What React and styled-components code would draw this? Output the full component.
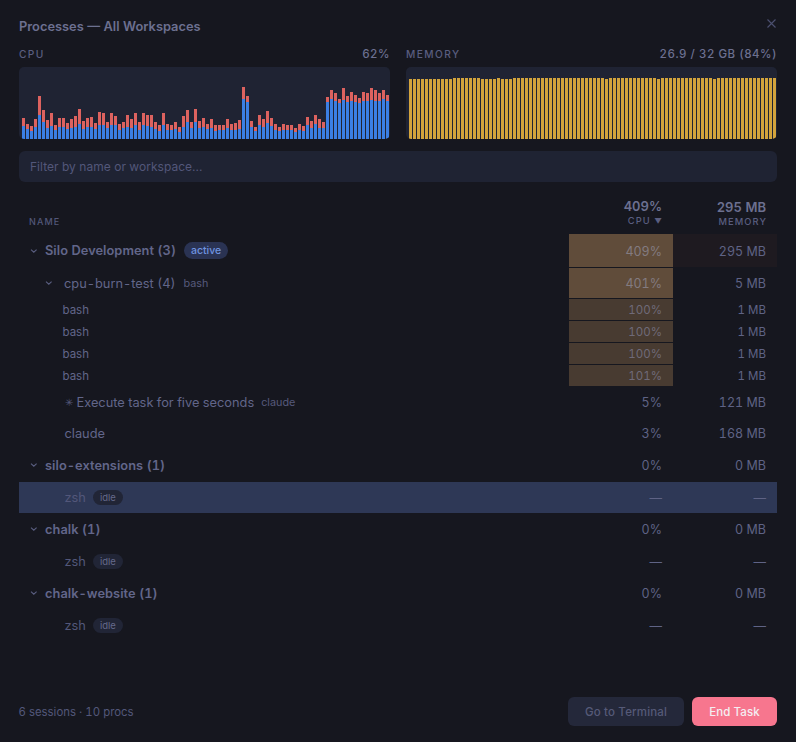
import React from "react";
import styled, { createGlobalStyle } from "styled-components";

const GlobalStyle = createGlobalStyle`
    html, body {
        margin: 0;
        padding: 0;
        background-color: #16171f;
    }
    * {
        box-sizing: border-box;
    }
`;

const Page = styled.div`
    display: flex;
    flex-direction: column;
    width: 796px;
    height: 742px;
    padding: 18px 19px 16px;
    background-color: #16171f;
    color: #6c7090;
    font-family: Inter, "Liberation Sans", sans-serif;
    font-variant-numeric: tabular-nums;
    overflow: hidden;
`;

const TitleBar = styled.div`
    display: flex;
    justify-content: space-between;
    align-items: flex-start;
    height: 18px;
    margin-bottom: 11px;
`;

const Title = styled.div`
    font-size: 12.85px;
    line-height: 18px;
    font-weight: 600;
    color: #6c7090;
`;

const CloseIcon = styled.svg`
    width: 9px;
    height: 9px;
    margin-right: 1px;
    margin-top: 1px;
    stroke: #4c5070;
    stroke-width: 1.1;
    fill: none;
`;

const Stats = styled.div`
    display: grid;
    grid-template-columns: 371px 371px;
    column-gap: 16px;
`;

const StatHead = styled.div`
    display: flex;
    justify-content: space-between;
    align-items: center;
    height: 14px;
    margin-bottom: 6px;
`;

const StatLabel = styled.span`
    font-size: 10.2px;
    font-weight: 500;
    letter-spacing: 1.4px;
    color: #5a5e80;
`;

const StatValue = styled.span`
    font-size: 11.5px;
    font-weight: 500;
    letter-spacing: 0.5px;
    color: #6c7090;
`;

const Chart = styled.svg`
    display: block;
    width: 371px;
    height: 72px;
    border-radius: 5px;
    background-color: #1f2333;
`;

const FilterInput = styled.input`
    display: block;
    width: 100%;
    height: 31px;
    margin-top: 12px;
    padding: 0 11px;
    border: none;
    outline: none;
    border-radius: 6px;
    background-color: #1f2333;
    color: #6c7090;
    font-family: inherit;
    font-size: 12px;
    letter-spacing: 0.03px;

    &::placeholder {
        color: #53577a;
        opacity: 1;
    }
`;

const Columns = styled.div`
    display: grid;
    grid-template-columns: 1fr 104px 104px;
`;

const HeaderRow = styled(Columns)`
    height: 36px;
    margin-top: 16px;
    padding-bottom: 8px;
    align-items: end;
`;

const HeaderName = styled.div`
    padding-left: 10px;
    font-size: 9px;
    line-height: 12px;
    font-weight: 500;
    letter-spacing: 1.1px;
    color: #53577a;
`;

const HeaderCell = styled.div`
    padding-right: 11px;
    text-align: right;
`;

const HeaderTotal = styled.div`
    margin-bottom: 1px;
    font-size: 13px;
    line-height: 16px;
    font-weight: 600;
    color: #6c7090;
`;

const HeaderLabel = styled.div`
    margin-right: -1px;
    font-size: 9.3px;
    line-height: 12px;
    font-weight: 500;
    letter-spacing: 1.1px;
    color: #5a5e80;
`;

const SortMark = styled.span`
    font-size: 7.5px;
    letter-spacing: 0;
    margin-right: 1px;
`;

const Row = styled(Columns)`
    height: ${(props) => props.$height}px;
    background-color: ${(props) => (props.$selected ? "#2e3856" : "transparent")};
`;

const NameCell = styled.div`
    display: flex;
    align-items: center;
    min-width: 0;
    padding-bottom: 1px;
    padding-left: ${(props) => props.$indent}px;
`;

const Chevron = styled.svg`
    flex: none;
    width: ${(props) => props.$box}px;
    height: 8px;
    stroke: #5a5e80;
    stroke-width: 1.1;
    fill: none;
`;

const RowName = styled.span`
    font-size: ${(props) => (props.$small ? 11.5 : 12.8)}px;
    font-weight: ${(props) => (props.$bold ? 600 : 400)};
    letter-spacing: ${(props) => (props.$bold ? 0.05 : 0)}px;
    color: ${(props) => props.$color || "#62668a"};
    white-space: nowrap;
`;

const Spark = styled.span`
    margin-right: 4px;
    font-size: 10px;
    color: #53577a;
`;

const Tag = styled.span`
    margin-left: ${(props) => props.$gap}px;
    font-size: 10.8px;
    color: #565a7c;
`;

const Pill = styled.span`
    display: inline-flex;
    align-items: center;
    height: ${(props) => (props.$active ? 17 : 15)}px;
    margin-left: ${(props) => (props.$active ? 8 : 7)}px;
    padding: 0 7px;
    border-radius: 9px;
    background-color: ${(props) => (props.$active ? "#2a3353" : "#212536")};
    color: ${(props) => (props.$active ? "#6f93e0" : "#65698a")};
    font-size: ${(props) => (props.$active ? 10.5 : 9.5)}px;
    font-weight: ${(props) => (props.$active ? 500 : 400)};
`;

const heat = {
    strong: "#604c3a",
    soft: "#483b31",
    mem: "#1e1a20",
};

const ValueCell = styled.div`
    display: flex;
    align-items: center;
    justify-content: flex-end;
    padding-right: 11px;
    padding-top: ${(props) => (props.$heat ? 1 : 0)}px;
    margin-bottom: ${(props) => (props.$heat ? 1 : 0)}px;
    background-color: ${(props) => heat[props.$heat] || "transparent"};
    color: ${(props) =>
        props.$heat === "strong"
            ? "#837b80"
            : props.$heat === "soft"
              ? "#6f6a78"
              : "#5f6385"};
    font-size: ${(props) => (props.$small ? 11.5 : 12.5)}px;
`;

const Footer = styled.div`
    display: flex;
    justify-content: space-between;
    align-items: center;
    margin-top: auto;
`;

const FooterText = styled.div`
    margin-left: -0.5px;
    font-size: 11.4px;
    color: #53577a;
`;

const Buttons = styled.div`
    display: flex;
    gap: 8px;
`;

const Button = styled.div`
    display: flex;
    align-items: center;
    justify-content: center;
    width: ${(props) => props.$width}px;
    height: 29px;
    border-radius: 6px;
    background-color: ${(props) => (props.$danger ? "#f7768e" : "#24283a")};
    color: ${(props) => (props.$danger ? "#f4eef2" : "#565a78")};
    font-size: 11.5px;
    font-weight: 500;
    letter-spacing: ${(props) => (props.$danger ? 0.05 : 0.15)}px;
`;

// total height, blue height per sample
const cpuSamples = [
    [21, 13], [15, 10], [13, 8], [20, 12], [43, 24], [29, 17], [19, 11], [26, 13],
    [14, 9], [21, 12], [21, 12], [16, 10], [20, 11], [23, 12], [30, 15], [18, 10],
    [21, 12], [22, 12], [16, 10], [27, 14], [26, 14], [17, 11], [26, 14], [23, 14],
    [15, 9], [17, 11], [24, 12], [20, 11], [26, 14], [17, 9], [26, 14], [24, 13],
    [24, 12], [17, 10], [14, 8], [26, 14], [15, 9], [14, 9], [17, 10], [12, 7],
    [23, 12], [29, 17], [17, 11], [30, 17], [18, 11], [21, 12], [15, 10], [20, 11],
    [14, 8], [14, 9], [14, 9], [20, 11], [15, 9], [16, 9], [19, 10], [52, 40],
    [43, 37], [18, 12], [12, 8], [24, 14], [20, 12], [28, 16], [21, 13], [15, 9],
    [12, 8], [15, 9], [14, 9], [14, 9], [11, 7], [15, 9], [13, 8], [22, 14],
    [18, 11], [24, 15], [20, 11], [17, 11], [42, 37], [49, 40], [46, 38], [40, 36],
    [51, 39], [43, 37], [47, 38], [44, 37], [41, 36], [47, 38], [46, 38], [51, 39],
    [49, 38], [46, 38], [49, 40], [44, 38],
];

const lowMemory = [0, 1, 2, 3, 4, 5, 6, 7, 8, 9, 10, 18, 19, 20, 21, 23, 24, 25, 49, 62, 76];
const memorySamples = Array.from({ length: 92 }, (_, i) => (lowMemory.includes(i) ? 60 : 61));

const CpuChart = () => (
    <Chart viewBox="0 0 371 72">
        {cpuSamples.map(([total, blue], i) => (
            <g key={i}>
                <rect x={3 + i * 4} y={72 - total} width="3" height={total - blue} fill="#dc625f" />
                <rect x={3 + i * 4} y={72 - blue} width="3" height={blue} fill="#3b7fe4" />
            </g>
        ))}
    </Chart>
);

const MemoryChart = () => (
    <Chart viewBox="0 0 371 72">
        {memorySamples.map((h, i) => (
            <rect key={i} x={3 + i * 4} y={72 - h} width="3" height={h} fill="#d3a43c" />
        ))}
    </Chart>
);

const Caret = ({ box }) => (
    <Chevron $box={box} viewBox={`0 0 ${box} 8`}>
        <path d="M1 2.6 L3.8 5.2 L6.6 2.6" />
    </Chevron>
);

const WorkspaceRow = ({ name, cpu, memory, cpuHeat, memHeat, badge }) => (
    <Row $height={badge ? 34 : 33}>
        <NameCell $indent={11}>
            <Caret box={15} />
            <RowName $bold>{name}</RowName>
            {badge && <Pill $active>{badge}</Pill>}
        </NameCell>
        <ValueCell $heat={cpuHeat}>{cpu}</ValueCell>
        <ValueCell $heat={memHeat}>{memory}</ValueCell>
    </Row>
);

const BashRow = ({ cpu }) => (
    <Row $height={22}>
        <NameCell $indent={43.5}>
            <RowName $small>bash</RowName>
        </NameCell>
        <ValueCell $heat="soft" $small>
            {cpu}
        </ValueCell>
        <ValueCell $small>1 MB</ValueCell>
    </Row>
);

const IdleRow = ({ selected }) => (
    <Row $height={31} $selected={selected}>
        <NameCell $indent={45.5}>
            <RowName $color="#53577a">zsh</RowName>
            <Pill>idle</Pill>
        </NameCell>
        <ValueCell>—</ValueCell>
        <ValueCell>—</ValueCell>
    </Row>
);

const App = () => {
    return (
        <Page>
            <GlobalStyle />
            <TitleBar>
                <Title>Processes — All Workspaces</Title>
                <CloseIcon viewBox="0 0 9 9">
                    <path d="M0.5 0.5 L8.5 8.5 M8.5 0.5 L0.5 8.5" />
                </CloseIcon>
            </TitleBar>
            <Stats>
                <div>
                    <StatHead>
                        <StatLabel>CPU</StatLabel>
                        <StatValue>62%</StatValue>
                    </StatHead>
                    <CpuChart />
                </div>
                <div>
                    <StatHead>
                        <StatLabel>MEMORY</StatLabel>
                        <StatValue>26.9 / 32 GB (84%)</StatValue>
                    </StatHead>
                    <MemoryChart />
                </div>
            </Stats>
            <FilterInput placeholder="Filter by name or workspace..." readOnly />
            <HeaderRow>
                <HeaderName>NAME</HeaderName>
                <HeaderCell>
                    <HeaderTotal>409%</HeaderTotal>
                    <HeaderLabel>
                        CPU <SortMark>▼</SortMark>
                    </HeaderLabel>
                </HeaderCell>
                <HeaderCell>
                    <HeaderTotal>295 MB</HeaderTotal>
                    <HeaderLabel>MEMORY</HeaderLabel>
                </HeaderCell>
            </HeaderRow>
            <div>
                <WorkspaceRow
                    name="Silo Development (3)"
                    badge="active"
                    cpu="409%"
                    memory="295 MB"
                    cpuHeat="strong"
                    memHeat="mem"
                />
                <Row $height={31}>
                    <NameCell $indent={26}>
                        <Caret box={19} />
                        <RowName>cpu-burn-test (4)</RowName>
                        <Tag $gap={8}>bash</Tag>
                    </NameCell>
                    <ValueCell $heat="strong">401%</ValueCell>
                    <ValueCell>5 MB</ValueCell>
                </Row>
                <BashRow cpu="100%" />
                <BashRow cpu="100%" />
                <BashRow cpu="100%" />
                <BashRow cpu="101%" />
                <Row $height={31}>
                    <NameCell $indent={45.5}>
                        <Spark>✳</Spark>
                        <RowName>Execute task for five seconds</RowName>
                        <Tag $gap={7}>claude</Tag>
                    </NameCell>
                    <ValueCell>5%</ValueCell>
                    <ValueCell>121 MB</ValueCell>
                </Row>
                <Row $height={31}>
                    <NameCell $indent={45.5}>
                        <RowName>claude</RowName>
                    </NameCell>
                    <ValueCell>3%</ValueCell>
                    <ValueCell>168 MB</ValueCell>
                </Row>
                <WorkspaceRow name="silo-extensions (1)" cpu="0%" memory="0 MB" />
                <IdleRow selected />
                <WorkspaceRow name="chalk (1)" cpu="0%" memory="0 MB" />
                <IdleRow />
                <WorkspaceRow name="chalk-website (1)" cpu="0%" memory="0 MB" />
                <IdleRow />
            </div>
            <Footer>
                <FooterText>6 sessions · 10 procs</FooterText>
                <Buttons>
                    <Button $width={116}>Go to Terminal</Button>
                    <Button $width={85} $danger>
                        End Task
                    </Button>
                </Buttons>
            </Footer>
        </Page>
    );
};

export default App;
